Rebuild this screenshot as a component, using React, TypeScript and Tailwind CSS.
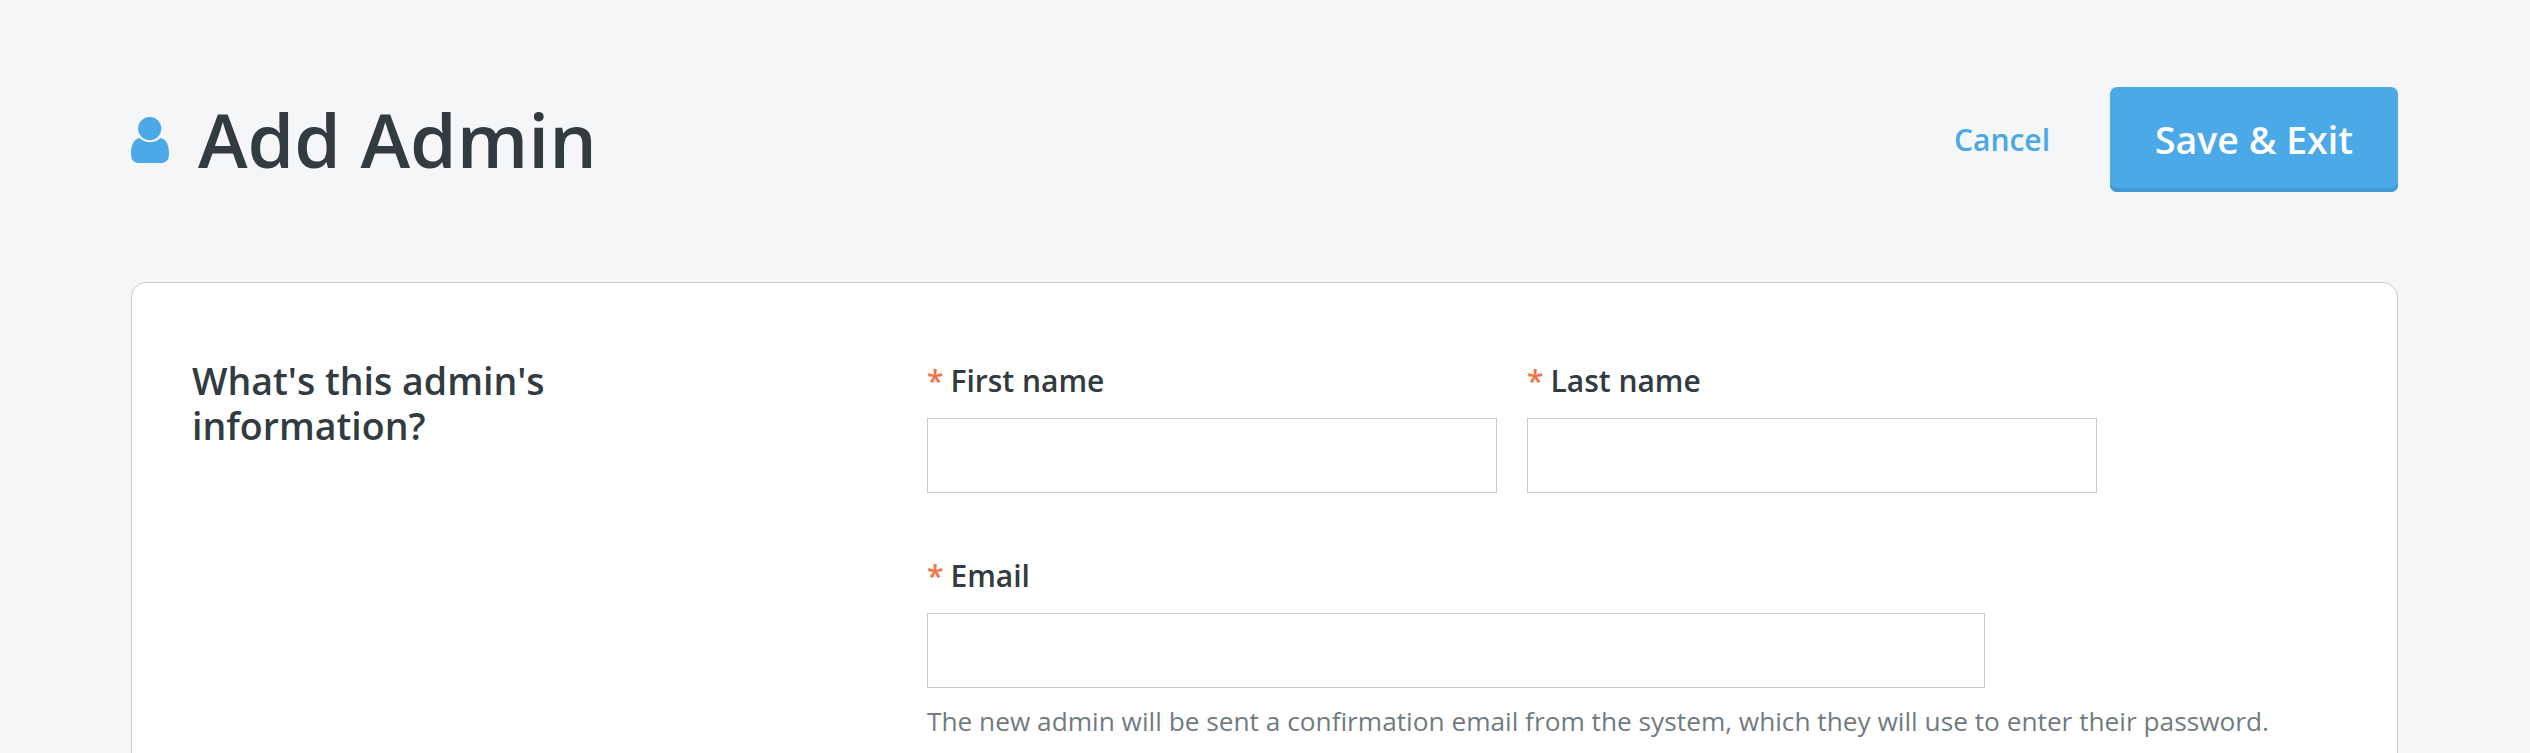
import React from "react";

function Field({ label, className, children }: { label: string; className: string; children?: React.ReactNode }) {
  return (
    <div>
      <label className="block text-[30px] leading-[40px] font-semibold">
        <span className="mr-[7px] text-[#ee7548]">*</span>
        {label}
      </label>
      <input aria-label={label} className={`mt-[17px] block h-[75px] border border-[#c8cacc] bg-white ${className}`} />
      {children}
    </div>
  );
}

export default function App() {
  return (
    <div className="h-[753px] overflow-hidden bg-[#f4f6f8] pt-[87px] pr-[132px] pl-[131px] font-['Open_Sans',sans-serif] text-[#313b40]">
      <header className="flex h-[105px] items-center justify-between">
        <div className="flex items-center">
          <svg width="38" height="46" viewBox="0 0 38 46" fill="#4aa9e6">
            <circle cx="18.700" cy="11.600" r="11.600" />
            <path d="M8.500 21 C2.500 22 0 29 0 36.500 C0 42.500 2.500 46 7.500 46 H30.500 C35.500 46 38 42.500 38 36.500 C38 29 35.500 22 29.500 21 C23.500 26.800 14.500 26.800 8.500 21 Z" />
          </svg>
          <h1 className="ml-[29px] text-[75px] leading-[105px] font-semibold">Add Admin</h1>
        </div>
        <div className="flex items-center">
          <a className="mr-[60px] text-[30px] leading-[40px] font-semibold text-[#4aa9e6]">Cancel</a>
          <button className="h-[105px] w-[288px] rounded-[7px] bg-[#4aa9e6] text-[37.5px] leading-[50px] font-semibold text-white shadow-[inset_0_-4px_0_#4299d3]">
            Save &amp; Exit
          </button>
        </div>
      </header>
      <section className="mt-[90px] flex h-[600px] rounded-[15px] border border-[#c8cacc] bg-white pt-[75px] pl-[60px]">
        <h2 className="w-[735px] text-[37.5px] leading-[45px] font-semibold">
          What's this admin's
          <br />
          information?
        </h2>
        <div className="pt-[3px]">
          <div className="mb-[63px] flex gap-[30px]">
            <Field label="First name" className="w-[570px]" />
            <Field label="Last name" className="w-[570px]" />
          </div>
          <Field label="Email" className="w-[1058px]">
            <p className="mt-[13px] text-[26.25px] leading-[40px] whitespace-nowrap text-[#717b80]">
              The new admin will be sent a confirmation email from the system, which they will use to enter their password.
            </p>
          </Field>
        </div>
      </section>
    </div>
  );
}
